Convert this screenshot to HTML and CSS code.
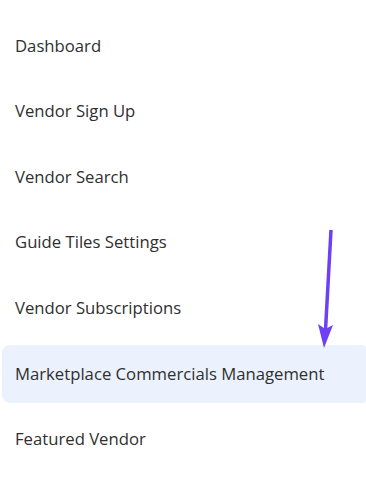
FILE: index.html
```html
<!DOCTYPE html>
<html>
<head>
    <title>Menu</title>
    <link rel="stylesheet" href="styles.css">
</head>
<body>
    <ul class="side-menu">
        <li class="menu-item">Dashboard</li>
        <li class="menu-item">Vendor Sign Up</li>
        <li class="menu-item">Vendor Search</li>
        <li class="menu-item">Guide Tiles Settings</li>
        <li class="menu-item">Vendor Subscriptions</li>
        <li class="menu-item active">Marketplace Commercials Management</li>
        <li class="menu-item">Featured Vendor</li>
    </ul>

    <svg class="pointer-arrow" width="30" height="130" viewBox="0 0 30 130">
        <line x1="21" y1="0" x2="15.5" y2="100" stroke="#6e3ff5" stroke-width="3.5" stroke-linecap="round"/>
        <path d="M14 118 L8 94 L15.3 99 L23 95 Z" fill="#6e3ff5"/>
    </svg>
</body>
</html>
```

FILE: styles.css
```css
* {
    margin: 0;
    padding: 0;
    box-sizing: border-box;
}

body {
    background-color: #ffffff;
    font-family: "Open Sans", sans-serif;
    overflow: hidden;
    position: relative;
    width: 366px;
    height: 481px;
}

/* ========== Menu ========== */
.side-menu {
    list-style: none;
    display: flex;
    flex-direction: column;
    gap: 7.66px;
    padding-top: 17px;
    margin-left: 2px;
}

.menu-item {
    height: 58px;
    display: flex;
    align-items: center;
    padding: 0 13px 2px;
    font-size: 16.7px;
    color: #2f2f2f;
    border-radius: 8px;
}

.menu-item.active {
    background-color: #ebf1fd;
    border-radius: 8px 4px 4px 8px;
}

.pointer-arrow {
    position: absolute;
    left: 310px;
    top: 230px;
}
```
